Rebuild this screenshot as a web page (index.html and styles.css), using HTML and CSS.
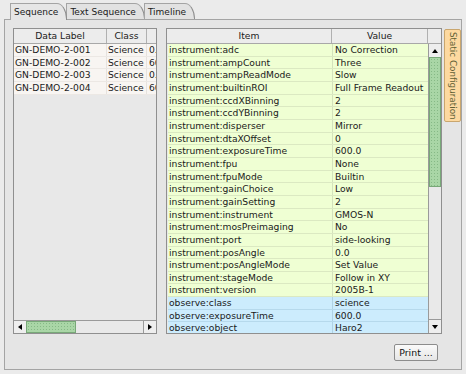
FILE: index.html
```html
<!DOCTYPE html>
<html lang="en">

<head>
  <meta charset="UTF-8" />
  <title>Sequence</title>
  <link rel="stylesheet" href="styles.css">
</head>

<body>
  <div class="tabs">
    <div class="tab active">Sequence</div>
    <div class="tab">Text Sequence</div>
    <div class="tab">Timeline</div>
  </div>

  <div class="panel">
    <div class="content">
      <!-- 左侧：数据列表 -->
      <div class="seq-table">
        <div class="head">
          <div class="hcell c-label">Data Label</div>
          <div class="hcell c-class">Class</div>
          <div class="hcell c-more"></div>
        </div>
        <div class="seq-rows">
          <div class="srow"><span class="c-label">GN-DEMO-2-001</span><span class="c-class">Science</span><span class="c-more">0.0</span></div>
          <div class="srow"><span class="c-label">GN-DEMO-2-002</span><span class="c-class">Science</span><span class="c-more">600.0</span></div>
          <div class="srow"><span class="c-label">GN-DEMO-2-003</span><span class="c-class">Science</span><span class="c-more">0.0</span></div>
          <div class="srow"><span class="c-label">GN-DEMO-2-004</span><span class="c-class">Science</span><span class="c-more">600.0</span></div>
        </div>
        <div class="hscroll">
          <div class="arrow-btn"><span class="tri tri-left"></span></div>
          <div class="hthumb"></div>
          <div class="htrack"></div>
          <div class="arrow-btn"><span class="tri tri-right"></span></div>
        </div>
      </div>

      <!-- 右侧：配置表 -->
      <div class="cfg-table">
        <div class="head">
          <div class="hcell c-item">Item</div>
          <div class="hcell c-value">Value</div>
          <div class="hcell c-corner"></div>
        </div>
        <div class="cfg-body">
          <div class="cfg-rows">
            <div class="row inst"><span class="c-item">instrument:adc</span><span class="c-value">No Correction</span></div>
            <div class="row inst"><span class="c-item">instrument:ampCount</span><span class="c-value">Three</span></div>
            <div class="row inst"><span class="c-item">instrument:ampReadMode</span><span class="c-value">Slow</span></div>
            <div class="row inst"><span class="c-item">instrument:builtinROI</span><span class="c-value">Full Frame Readout</span></div>
            <div class="row inst"><span class="c-item">instrument:ccdXBinning</span><span class="c-value">2</span></div>
            <div class="row inst"><span class="c-item">instrument:ccdYBinning</span><span class="c-value">2</span></div>
            <div class="row inst"><span class="c-item">instrument:disperser</span><span class="c-value">Mirror</span></div>
            <div class="row inst"><span class="c-item">instrument:dtaXOffset</span><span class="c-value">0</span></div>
            <div class="row inst"><span class="c-item">instrument:exposureTime</span><span class="c-value">600.0</span></div>
            <div class="row inst"><span class="c-item">instrument:fpu</span><span class="c-value">None</span></div>
            <div class="row inst"><span class="c-item">instrument:fpuMode</span><span class="c-value">Builtin</span></div>
            <div class="row inst"><span class="c-item">instrument:gainChoice</span><span class="c-value">Low</span></div>
            <div class="row inst"><span class="c-item">instrument:gainSetting</span><span class="c-value">2</span></div>
            <div class="row inst"><span class="c-item">instrument:instrument</span><span class="c-value">GMOS-N</span></div>
            <div class="row inst"><span class="c-item">instrument:mosPreimaging</span><span class="c-value">No</span></div>
            <div class="row inst"><span class="c-item">instrument:port</span><span class="c-value">side-looking</span></div>
            <div class="row inst"><span class="c-item">instrument:posAngle</span><span class="c-value">0.0</span></div>
            <div class="row inst"><span class="c-item">instrument:posAngleMode</span><span class="c-value">Set Value</span></div>
            <div class="row inst"><span class="c-item">instrument:stageMode</span><span class="c-value">Follow in XY</span></div>
            <div class="row inst"><span class="c-item">instrument:version</span><span class="c-value">2005B-1</span></div>
            <div class="row obs"><span class="c-item">observe:class</span><span class="c-value">science</span></div>
            <div class="row obs"><span class="c-item">observe:exposureTime</span><span class="c-value">600.0</span></div>
            <div class="row obs"><span class="c-item">observe:object</span><span class="c-value">Haro2</span></div>
          </div>
          <div class="vscroll">
            <div class="arrow-btn"><span class="tri tri-up"></span></div>
            <div class="vthumb"></div>
            <div class="vtrack"></div>
            <div class="arrow-btn"><span class="tri tri-down"></span></div>
          </div>
        </div>
      </div>

      <div class="side-tab">Static Configuration</div>
    </div>

    <div class="actions">
      <button class="print-btn">Print ...</button>
    </div>
  </div>
</body>

</html>
```

FILE: styles.css
```css
* {
  box-sizing: border-box;
}

body {
  margin: 0;
  background: #ebebeb;
  font-family: "DejaVu Sans", sans-serif;
  font-size: 9.2px;
  color: #1a1a1a;
}

/* 顶部标签 */
.tabs {
  display: flex;
  padding: 3px 0 0 10px;
  height: 19px;
}

.tab {
  height: 16px;
  padding: 2px 8px 0 3px;
  border: 1px solid #a4a4a4;
  border-bottom: none;
  border-right-color: #8c8c8c;
  border-top-right-radius: 10px 16px;
  background: #e2e2e2;
  font-size: 9px;
  line-height: 12px;
  margin-right: -1px;
}

.tab.active {
  background: #e6e6e6;
  height: 17px;
  margin-bottom: -1px;
  position: relative;
  z-index: 1;
}

.panel {
  margin: 0 4px;
  height: 351px;
  border: 1px solid #a4a4a4;
  background: #e5e5e5;
  padding: 8px 0 0 8px;
}

.content {
  display: flex;
  height: 306px;
}

/* 表头通用 */
.head {
  display: flex;
  height: 15px;
  border-bottom: 1px solid #a8a8a8;
  background: #ececec;
}

.hcell {
  text-align: center;
  line-height: 14px;
  border-right: 1px solid #b0b0b0;
  overflow: hidden;
}

/* 左侧表 */
.seq-table {
  width: 144px;
  border: 1px solid #8f8f8f;
  display: flex;
  flex-direction: column;
  background: #e8e8e8;
}

.c-label {
  width: 93px;
}

.c-class {
  width: 40px;
}

.c-more {
  flex: 1;
  border-right: none;
}

.seq-rows {
  flex: 1;
}

.srow {
  display: flex;
  height: 12.67px;
  line-height: 12px;
  background: #f8f5f2;
  border-bottom: 1px solid #ece8e4;
}

.srow span {
  padding-left: 1px;
  white-space: nowrap;
  overflow: hidden;
  border-right: 1px solid #e6e2de;
}

.srow .c-more {
  border-right: none;
  padding-left: 2px;
}

.hscroll {
  display: flex;
  height: 13px;
  border-top: 1px solid #9a9a9a;
  background: #ececec;
}

.arrow-btn {
  width: 12px;
  display: flex;
  align-items: center;
  justify-content: center;
  background: #eeeeee;
}

.hthumb {
  width: 50px;
  background-color: #a9d6a6;
  background-image: radial-gradient(circle, #86b986 0.7px, transparent 0.9px);
  background-size: 3px 3px;
  border: 1px solid #78a878;
}

.htrack {
  flex: 1;
  background: #e9e9e9;
  border-right: 1px solid #9a9a9a;
}

.tri {
  width: 0;
  height: 0;
  border: 3px solid transparent;
}

.tri-left {
  border-right: 4px solid #000;
  border-left: none;
}

.tri-right {
  border-left: 4px solid #000;
  border-right: none;
}

.tri-up {
  border-bottom: 4px solid #000;
  border-top: none;
}

.tri-down {
  border-top: 4px solid #000;
  border-bottom: none;
}

/* 右侧表 */
.cfg-table {
  margin-left: 9px;
  width: 276px;
  border: 1px solid #8f8f8f;
  display: flex;
  flex-direction: column;
  background: #fff;
}

.c-item {
  width: 165px;
}

.c-value {
  width: 96px;
}

.c-corner {
  flex: 1;
  border-right: none;
}

.cfg-body {
  flex: 1;
  display: flex;
  overflow: hidden;
}

.cfg-rows {
  width: 261px;
  padding-left: 1px;
  overflow: hidden;
  background: #e8e8e8;
}

.row {
  display: flex;
  height: 12.67px;
  line-height: 12px;
}

.row span {
  padding-left: 1px;
  white-space: nowrap;
  overflow: hidden;
}

.row .c-item {
  width: 165px;
}

.row .c-value {
  width: 95px;
  padding-left: 2px;
}

.row.inst {
  background: #efffd3;
  border-bottom: 1px solid #dbe9c2;
}

.row.inst .c-item {
  border-right: 1px solid #d4e2bc;
}

.row.obs {
  background: #ccecfd;
  border-bottom: 1px solid #b6d9ec;
}

.row.obs .c-item {
  border-right: 1px solid #b0d2e4;
}

.vscroll {
  flex: 1;
  display: flex;
  flex-direction: column;
  border-left: 1px solid #9a9a9a;
  background: #e9e9e9;
}

.vscroll .arrow-btn {
  width: auto;
  height: 13px;
}

.vthumb {
  height: 130px;
  background-color: #a9d6a6;
  background-image: radial-gradient(circle, #86b986 0.7px, transparent 0.9px);
  background-size: 3px 3px;
  border: 1px solid #78a878;
}

.vtrack {
  flex: 1;
  border-bottom: 1px solid #9a9a9a;
}

.side-tab {
  margin-left: 2px;
  margin-top: 1px;
  width: 17px;
  height: 93px;
  background: #fdd9a0;
  border: 1px solid #c9a66e;
  border-radius: 2px;
  writing-mode: vertical-rl;
  text-align: center;
  line-height: 15px;
  font-size: 8.8px;
  color: #5f5f35;
}

.actions {
  display: flex;
  justify-content: flex-end;
  padding: 10px 23px 0 0;
}

.print-btn {
  height: 17px;
  width: 44px;
  padding: 0;
  font-family: "DejaVu Sans", sans-serif;
  font-size: 9.4px;
  color: #111;
  background: linear-gradient(#fafafa, #e6e6e6);
  border: 1px solid #8c8c8c;
  border-radius: 2px;
}
```
